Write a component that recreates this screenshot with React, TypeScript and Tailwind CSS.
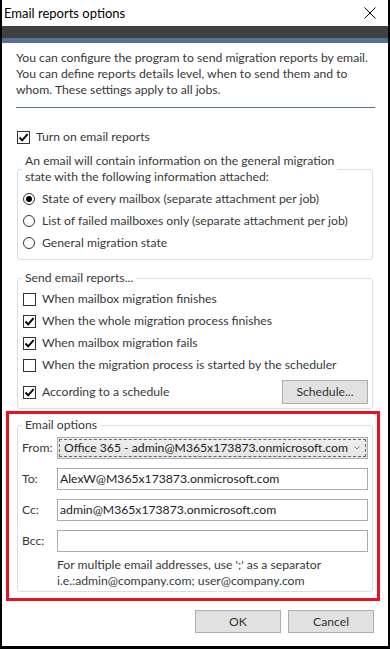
import React from "react";

function Check({ checked }: { checked: boolean }) {
  return (
    <span className="w-[13px] h-[13px] shrink-0 border border-[#333333] bg-white flex items-center justify-center">
      {checked && (
        <svg width="11" height="11" viewBox="0 0 11 11">
          <path d="M1.5 5.5 L4.2 8.3 L9.6 2.2" fill="none" stroke="#000" strokeWidth="1.9" />
        </svg>
      )}
    </span>
  );
}

function Radio({ checked }: { checked: boolean }) {
  return (
    <span className="w-[12px] h-[12px] shrink-0 rounded-full border border-[#333333] bg-white flex items-center justify-center">
      {checked && <span className="w-[6px] h-[6px] rounded-full bg-black" />}
    </span>
  );
}

function CheckRow({ checked, label }: { checked: boolean; label: string }) {
  return (
    <div className="h-[22px] flex items-center gap-[6px] pl-[1px]">
      <Check checked={checked} />
      <span>{label}</span>
    </div>
  );
}

function RadioRow({ checked, label }: { checked: boolean; label: string }) {
  return (
    <div className="h-[22px] flex items-center gap-[7px] pl-[1px]">
      <Radio checked={checked} />
      <span>{label}</span>
    </div>
  );
}

function Field({ label, value }: { label: string; value: string }) {
  return (
    <div className="flex items-center h-[22px]">
      <span className="w-[35px]">{label}</span>
      <div className="w-[311px] h-[22px] border border-[#ababab] bg-white flex items-center pl-[2px] text-[#222]">
        {value}
      </div>
    </div>
  );
}

export default function App() {
  return (
    <div className="w-[390px] h-[649px] bg-white border-x-2 border-b-[3px] border-black flex flex-col text-[12.2px] leading-[16px] text-[#383838] font-['Lato',sans-serif] overflow-hidden">
      <div className="h-[26px] shrink-0 flex items-center justify-between pl-[2px] pr-[12px]">
        <span className="text-black text-[13px]">Email reports options</span>
        <svg width="12" height="12" viewBox="0 0 12 12">
          <path d="M0.5 0.5 L11.5 11.5 M11.5 0.5 L0.5 11.5" stroke="#000" strokeWidth="1" />
        </svg>
      </div>
      <div className="h-[12px] shrink-0 bg-[#404040]" />
      <div className="h-[5px] shrink-0 bg-[#5a6f96]" />

      <div className="flex flex-col pl-[14px] w-[374px]">
        <p className="pt-[7px]">
          You can configure the program to send migration reports by email.
          <br />
          You can define reports details level, when to send them and to
          <br />
          whom. These settings apply to all jobs.
        </p>
        <div className="mt-[9px] h-px w-[359px] bg-[#56709a]" />

        <div className="mt-[21px] h-[16px] flex items-center gap-[6px] pl-[1px]">
          <Check checked />
          <span>Turn on email reports</span>
        </div>

        <fieldset className="mt-[8px] ml-[1px] w-[356px] border border-[#d5dfe5] rounded-[3px] px-[4px] pb-[5px]">
          <legend className="px-[3px]">
            An email will contain information on the general migration
            <br />
            state with the following information attached:
          </legend>
          <div className="pt-[3px] flex flex-col">
            <RadioRow checked label="State of every mailbox (separate attachment per job)" />
            <RadioRow checked={false} label="List of failed mailboxes only (separate attachment per job)" />
            <RadioRow checked={false} label="General migration state" />
          </div>
        </fieldset>

        <fieldset className="mt-[10px] ml-[1px] w-[356px] border border-[#d5dfe5] rounded-[3px] px-[4px] pb-[4px]">
          <legend className="px-[3px]">Send email reports...</legend>
          <div className="pt-[2px] flex flex-col">
            <CheckRow checked={false} label="When mailbox migration finishes" />
            <CheckRow checked label="When the whole migration process finishes" />
            <CheckRow checked label="When mailbox migration fails" />
            <CheckRow checked={false} label="When the migration process is started by the scheduler" />
            <div className="mt-[4px] h-[24px] flex items-center justify-between">
              <div className="flex items-center gap-[6px] pl-[1px]">
                <Check checked />
                <span>According to a schedule</span>
              </div>
              <button className="w-[86px] h-[24px] bg-[#e1e1e1] border border-[#adadad] text-[#333333]">
                Schedule...
              </button>
            </div>
          </div>
        </fieldset>

        <div className="mt-[2px] -ml-[10px] w-[374px] h-[190px] border-[3px] border-[#e81123] flex flex-col">
          <fieldset className="mt-[3px] ml-[8px] w-[356px] border border-[#d5dfe5] rounded-[3px] px-[4px] pb-[2px]">
            <legend className="px-[3px]">Email options</legend>
            <div className="pt-[4px] flex flex-col gap-[9px]">
              <div className="flex items-center h-[22px]">
                <span className="w-[35px]">From:</span>
                <div className="w-[311px] h-[22px] border border-[#acacac] bg-gradient-to-b from-[#f0f0f0] to-[#e5e5e5] p-[1px]">
                  <div className="h-full border border-dashed border-[#666] flex items-center justify-between pl-[4px] pr-[5px] text-[#222]">
                    <span>Office 365 - admin@M365x173873.onmicrosoft.com</span>
                    <svg width="6" height="4" viewBox="0 0 6 4">
                      <path d="M0.5 0.5 L3 3 L5.5 0.5" fill="none" stroke="#777" strokeWidth="1" />
                    </svg>
                  </div>
                </div>
              </div>
              <Field label="To:" value="AlexW@M365x173873.onmicrosoft.com" />
              <Field label="Cc:" value="admin@M365x173873.onmicrosoft.com" />
              <Field label="Bcc:" value="" />
            </div>
            <p className="mt-[5px] pl-[35px]">
              For multiple email addresses, use ';' as a separator
              <br />
              i.e.:admin@company.com; user@company.com
            </p>
          </fieldset>
        </div>

        <div className="mt-[9px] flex justify-end gap-[7px] w-[358px]">
          <button className="w-[86px] h-[23px] bg-[#e1e1e1] border border-[#adadad] text-[#333333]">OK</button>
          <button className="w-[86px] h-[23px] bg-[#e1e1e1] border border-[#adadad] text-[#333333]">Cancel</button>
        </div>
      </div>
    </div>
  );
}
